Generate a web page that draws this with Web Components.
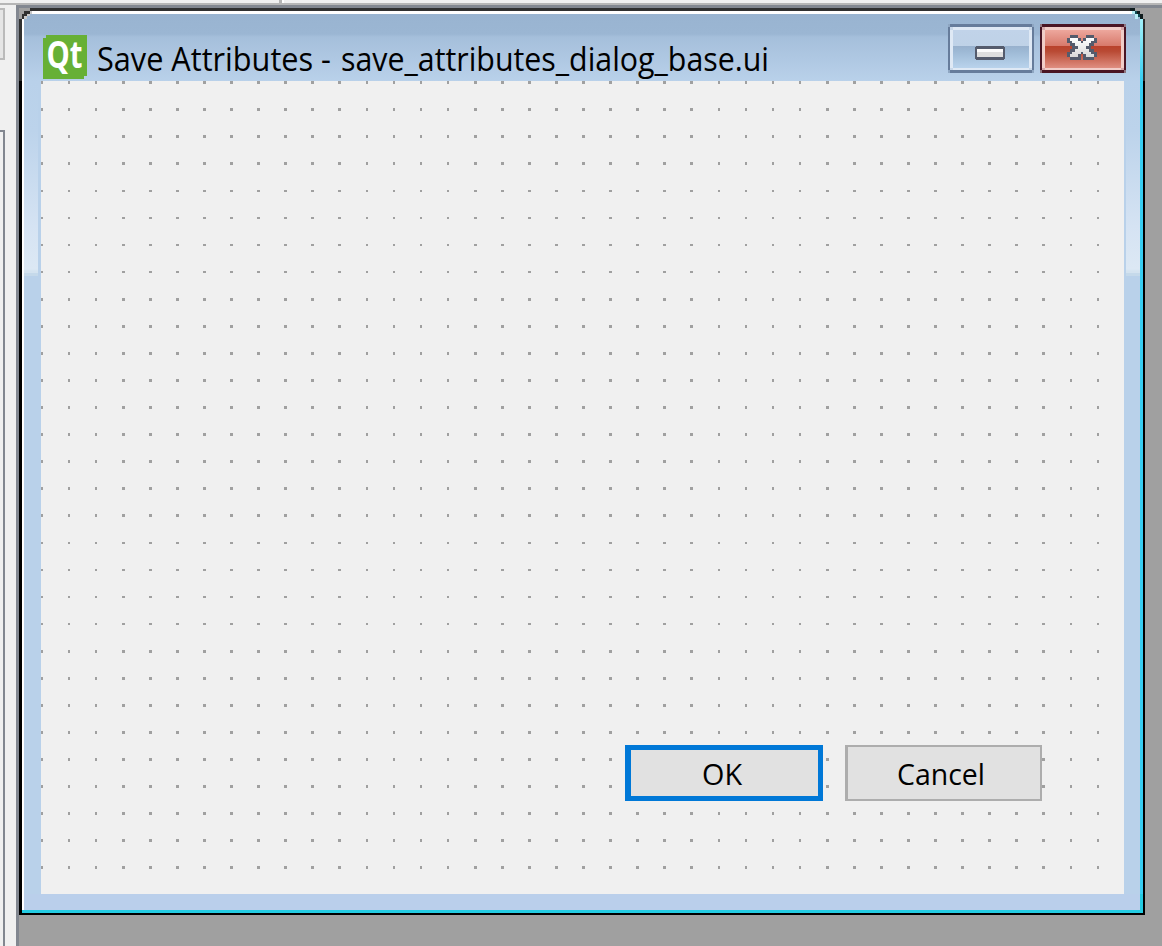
<!DOCTYPE html>
<html lang="en">
<head>
<meta charset="utf-8">
<title>Save Attributes</title>
<style>
html,body{margin:0;height:100%;overflow:hidden;background:#a0a0a0}
body{font-family:"Open Sans","Noto Sans",sans-serif;color:#000}
</style>
</head>
<body>
<designer-workspace>
  <mdi-window>
    <title-bar slot="title"></title-bar>
    <form-canvas>
      <push-button default label="OK" text-x="77" text-width="40"></push-button>
      <push-button label="Cancel" text-x="52" text-width="88"></push-button>
    </form-canvas>
  </mdi-window>
</designer-workspace>
<script>
const define = (name, html, setup) => customElements.define(name, class extends HTMLElement {
  constructor() {
    super();
    this.attachShadow({mode: 'open'}).innerHTML = html;
  }
  connectedCallback() { if (setup) setup(this, this.shadowRoot); }
});

define('side-panel', `
<style>
:host{display:flex;flex-direction:column;box-sizing:border-box;width:16px;height:100%;background:#f0f0f0}
.tool{box-sizing:border-box;width:5px;height:52px;margin-top:3px;border:2px solid #bababa;border-left:0;background:#e5e5e5}
.list{box-sizing:border-box;width:5px;flex:1;margin-top:70px;border:2px solid #828790;border-left:0;border-bottom:0;background:#f0f0f0}
</style><div class="tool"></div><div class="list"></div>`);

define('designer-workspace', `
<style>
:host{display:grid;grid-template-rows:5px 941px;width:1162px;height:946px}
.strip{box-sizing:border-box;display:flex;background:#f0f0f0;border-bottom:2px solid #b6b6b6}
.strip i{margin-left:279px;width:3px;height:3px;background:#b4b4b4;border-right:2px solid #fff}
.main{display:grid;grid-template-columns:16px 1fr}
.area{box-sizing:border-box;border:3px solid #828790;border-right:0;border-bottom:0;background:#a0a0a0}
</style>
<div class="strip"><i></i></div>
<div class="main"><side-panel></side-panel><div class="area"><slot></slot></div></div>`);

define('mdi-window', `
<style>
:host{display:grid;position:relative;grid-template-columns:3px 2px 17px 1083px 16px 3px 2px;grid-template-rows:3px 3px 67px 813px 16px 3px 2px;width:1126px;height:907px;background:#b9d1ea}
.top{grid-area:1/1/2/8;background:#303030}
.l{grid-area:2/1/8/2;background:linear-gradient(#303030 70px,#000 70px)}
.r{grid-area:2/7/8/8;background:linear-gradient(#303030 70px,#000 70px)}
.b{grid-area:7/1/8/8;background:#000}
.white{grid-area:2/2/3/7;background:#fff}
.wl{grid-area:2/2/6/3;background:#fff}
.cr{grid-area:2/6/7/7;background:linear-gradient(#b0f4fc,#80e5f6 30px,#38cff3 68px,#38cff3 883px,#24cce3 883px)}
.cb{grid-area:6/2/7/7;background:#24cce3}
.title{grid-area:3/3/4/6;background:linear-gradient(#99b4d1 0,#9bb6d3 20px,#a5bfdb 23px,#b9d1ea 100%)}
.gl,.gr{background:linear-gradient(#b9d1ea 0,#bcd3eb 50px,#d5e3f3 145px,#dce8f4 188px,#d4e3f0 190px,#d4e3f0 192px,#c5d9ea 192px,#c5d9ea 195px,#b9d1ea 195px)}
.gl{grid-area:4/3/5/4;margin-right:3px}
.gr{grid-area:4/5/5/6;margin-left:2px}
.body{grid-area:4/4/5/5}
.bottom{grid-area:5/3/6/6;background:#bacfeb}
.corners{position:absolute;left:0;top:0;width:1126px;height:14px}
</style>
<div class="top"></div><div class="l"></div><div class="r"></div>
<div class="white"></div><div class="wl"></div><div class="cb"></div><div class="cr"></div><div class="b"></div>
<div class="title"><slot name="title"></slot></div>
<div class="gl"></div><div class="gr"></div><div class="bottom"></div><div class="body"><slot></slot></div>
<svg class="corners" viewBox="0 0 1126 14" shape-rendering="crispEdges">
<path fill="#a0a0a0" d="M0 0h11v3h-6v3h-2v5h-3z"/>
<path fill="#303030" d="M5 3h6v3h-6zM3 6h5v3h-3v2h-2z"/>
<path fill="#c9c9c9" d="M8 6h3v2h-3zM5 8h3v3h-3zM11 3h2v3h-2z"/>
<path fill="#a0a0a0" d="M1116 0h10v11h-2v-5h-3v-3h-5z"/>
<path fill="#101c1e" d="M1111 0h5v3h-5z"/>
<path fill="#104c54" d="M1116 3h3v3h-3zM1119 6h2v3h-2z"/>
<path fill="#b7edf5" d="M1113 3h3v3h-3zM1116 6h3v5h-3z"/>
<path fill="#101c1e" d="M1118 3h3v3h-3zM1121 6h3v5h-3z"/>
</svg>`);

define('fitted-text', `
<style>:host{display:block;font-family:inherit}svg{display:block;overflow:visible}</style>
<svg width="100%" height="100%"><text lengthAdjust="spacingAndGlyphs"></text></svg>`,
(host, root) => {
  const text = root.querySelector('text');
  text.textContent = host.getAttribute('text');
  text.setAttribute('y', host.getAttribute('baseline'));
  text.setAttribute('textLength', host.getAttribute('length'));
  text.style.fontSize = host.getAttribute('size') + 'px';
});

define('qt-icon', `
<style>:host{display:block;width:44px;height:44px}svg{display:block;overflow:visible}</style>
<svg width="44" height="44" viewBox="0 0 44 44"><path fill="#67b035" d="M3 0h41v41h-3v3H0V3h3z"/>
<text x="3.5" y="32.5" font-family="Open Sans,Noto Sans,sans-serif" font-size="37" font-weight="700" fill="#fff" textLength="36" lengthAdjust="spacingAndGlyphs">Qt</text></svg>`);

// The cross is a small bitmap: D is its outline, W its filling.
const CROSS = [
  '.DDD...DDD.',
  'DWWWD.DWWWD',
  'DDWWWDWWWDD',
  '.DDWWWWWDD.',
  '..DDWWWDD..',
  '.DDWWWWWDD.',
  'DDWWWDWWWDD',
  'DWWWD.DWWWD',
  '.DDDD.DDDD.'
];
const crossPath = kind => {
  let d = '';
  CROSS.forEach((row, j) => [...row].forEach((cell, i) => {
    if (cell !== kind) return;
    const x = Math.round(27 + i * 2.72), y = Math.round(11 + j * 2.75);
    const r = Math.round(27 + (i + 1) * 2.72), b = Math.round(11 + (j + 1) * 2.75);
    d += `M${x} ${y}H${r}V${b}H${x}z`;
  }));
  return d;
};

define('caption-button', `
<style>:host{display:block;width:86px;height:49px}svg{display:block}</style>
<svg width="86" height="49" viewBox="0 0 86 49" shape-rendering="crispEdges"></svg>`,
(host, root) => {
  const close = host.getAttribute('kind') === 'close';
  const c = close
    ? {edge: '#4a1524', corner: '#8e747f', rim: '#f1cdc8', dot: '#d5a9ac', a: '#eda79d', b: '#d7796b', c: '#b9412c', d: '#b94a34', e: '#df8e80'}
    : {edge: '#667c9b', corner: '#8ea6c2', rim: '#dfe9f5', dot: '#c9d8e9', a: '#c1d3e9', b: '#bfd2e7', c: '#98b1cd', d: '#9db9d5', e: '#b9d3ec'};
  const glyph = close
    ? `<path fill="#545b6c" d="${crossPath('D')}"/><path fill="url(#g)" d="${crossPath('W')}"/>`
    : `<path fill="#545b6c" d="M28 22h28v1h1v12h-1v1H28v-1h-1V23h1z"/><path fill="#fbfbfb" d="M29 25h26v8H29z"/><path fill="#dedede" d="M29 28h26v5H29z"/>`;
  root.querySelector('svg').innerHTML = `
  <defs><linearGradient id="p" x2="0" y2="1"><stop offset="0" stop-color="${c.a}"/><stop offset=".42" stop-color="${c.b}"/><stop offset=".42" stop-color="${c.c}"/><stop offset=".56" stop-color="${c.d}"/><stop offset="1" stop-color="${c.e}"/></linearGradient>
  <linearGradient id="g" x2="0" y2="1"><stop offset="0" stop-color="#fff"/><stop offset="1" stop-color="#d9d9d9"/></linearGradient></defs>
  <path fill="${c.corner}" d="M0 0h86v49H0z"/><path fill="${c.edge}" d="M2 0h82v3h2v43h-2v3H2v-3H0V3h2z"/>
  <path fill="${c.rim}" d="M2 3h82v43H2z"/>
  <path fill="${c.dot}" d="M2 3h3v3H2zM81 3h3v3h-3zM2 44h3v2H2zM81 44h3v2h-3z"/>
  <path fill="url(#p)" d="M5 6h76v38H5z"/>${glyph}`;
});

define('title-bar', `
<style>
:host{display:flex;height:67px;align-items:flex-start}
qt-icon{margin:21px 0 0 19px}
fitted-text{height:67px}
.name{width:244px;margin-left:10px}
.file{width:428px}
.buttons{display:flex;gap:6px;margin:10px 14px 0 auto}
</style>
<qt-icon></qt-icon>
<fitted-text class="name" text="Save Attributes -" baseline="56.5" length="234" size="32.5"></fitted-text>
<fitted-text class="file" text="save_attributes_dialog_base.ui" baseline="56.5" length="428" size="32.5"></fitted-text>
<div class="buttons"><caption-button kind="minimize"></caption-button><caption-button kind="close"></caption-button></div>`);

define('form-canvas', `
<style>
:host{display:grid;width:1083px;height:813px;background:#f0f0f0}
svg,.actions{grid-area:1/1}
.actions{display:flex;justify-content:flex-end;align-items:flex-end;gap:22px;padding:0 82px 93px 0}
</style>
<svg width="1083" height="813" shape-rendering="crispEdges"><path fill="#a0a0a0"/></svg>
<div class="actions"><slot></slot></div>`,
(host, root) => {
  // Grid points sit every ten form pixels, snapped to whole device pixels.
  const scale = 2.70765;
  const snap = n => Math.round(n * scale);
  let d = '';
  for (let row = 30; row <= 320; row += 10)
    for (let col = 15; col <= 405; col += 10) {
      const x = snap(col), y = snap(row), w = snap(col + 1) - x, h = snap(row + 1) - y;
      d += `M${x - 41} ${y - 81}h${w}v${h}h${-w}z`;
    }
  root.querySelector('path').setAttribute('d', d);
});

define('push-button', `
<style>
:host{display:block;box-sizing:border-box;width:197px;height:56px;background:#e1e1e1;border:2px solid #adadad;border-left-width:3px}
:host([default]){width:198px;border:5px solid #0078d7;border-left-width:6px}
</style>`,
(host, root) => {
  const isDefault = host.hasAttribute('default');
  const label = document.createElement('fitted-text');
  label.style.marginLeft = (host.getAttribute('text-x') - (isDefault ? 6 : 3)) + 'px';
  label.style.height = '40px';
  label.setAttribute('text', host.getAttribute('label'));
  label.setAttribute('baseline', isDefault ? 35 : 38);
  label.setAttribute('length', host.getAttribute('text-width'));
  label.setAttribute('size', '29.5');
  root.append(label);
});
</script>
</body>
</html>
